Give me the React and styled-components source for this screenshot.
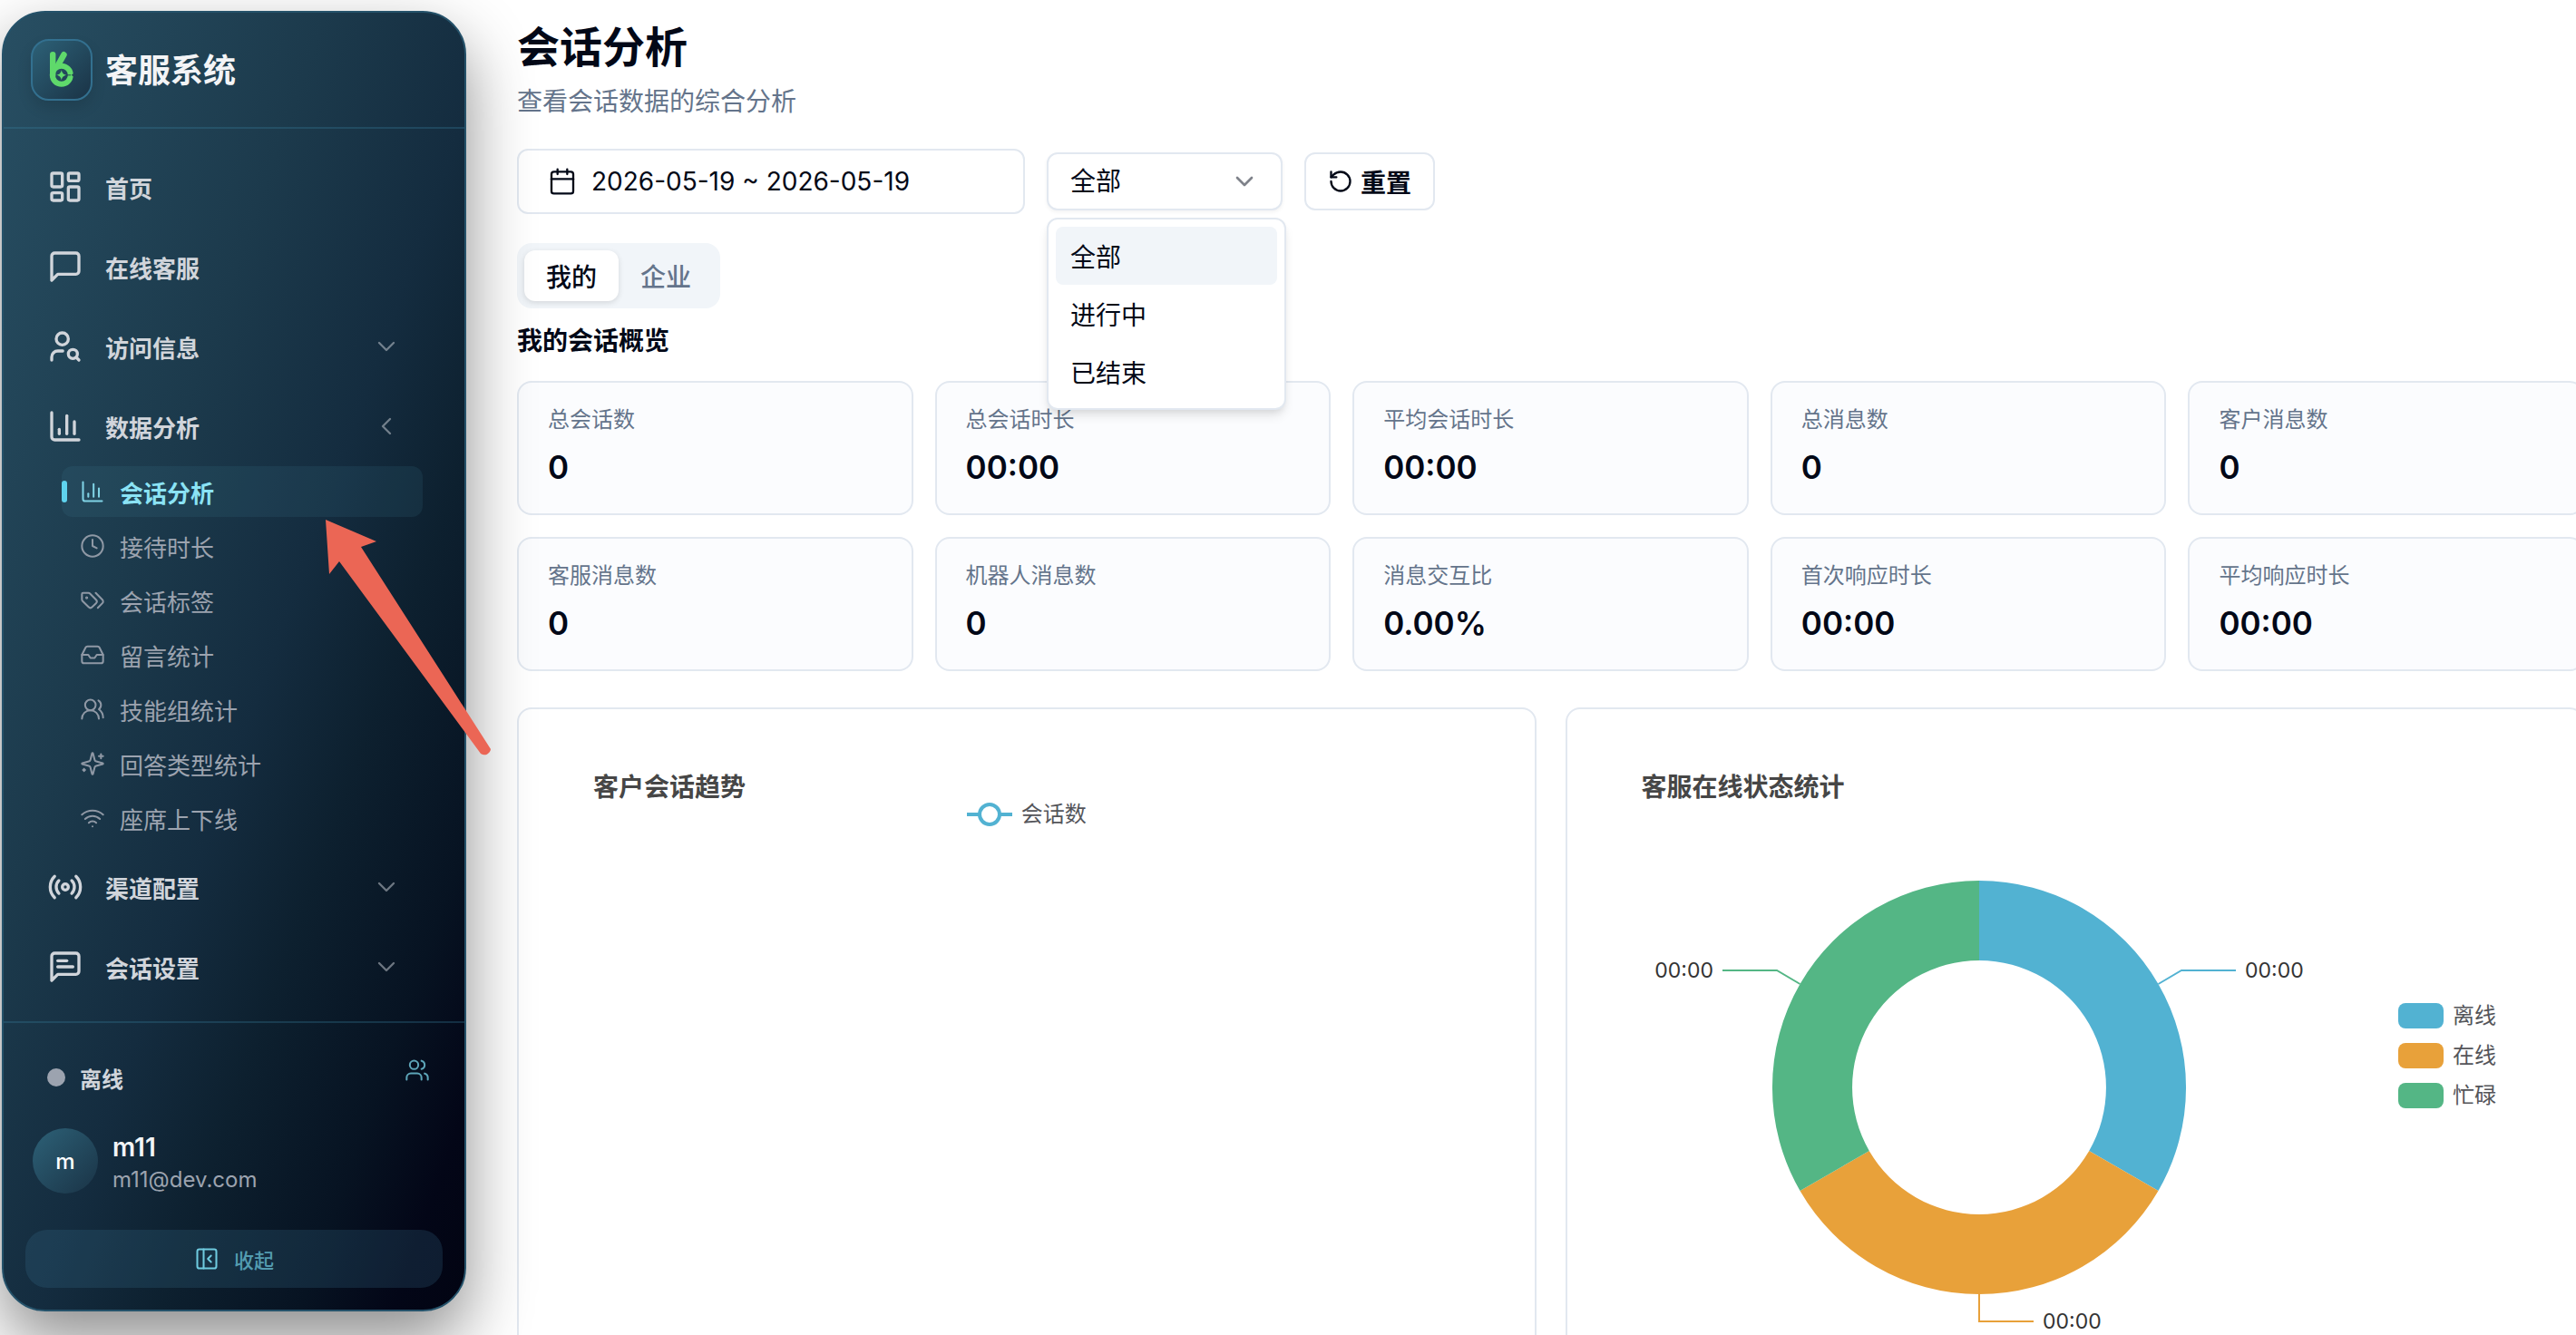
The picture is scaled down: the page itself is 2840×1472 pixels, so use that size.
import { useState } from "react"
import styled, { createGlobalStyle } from "styled-components"
import {
  Calendar, ChartColumn, ChevronDown, ChevronLeft, Clock, Inbox, LayoutDashboard, PanelLeftClose,
  Radio, RotateCcw, UserSearch, Users, UsersRound, Wifi
} from "lucide-react"


const GlobalStyle = createGlobalStyle`
  * {
    box-sizing: border-box;
  }

  body {
    margin: 0;
    background-color: #fff;
    color: #020817;
    font-family: Inter, "Noto Sans CJK SC", sans-serif;
    font-size: 28px;
  }

  button, select {
    font: inherit;
    color: inherit;
    cursor: pointer;
  }

  h1, h2, h3, p, ul, dl, dd {
    margin: 0;
    padding: 0;
  }

  ul {
    list-style: none;
  }
`

const AppContainer = styled.div`
  position: relative;
  display: flex;
  height: 100vh;
  overflow: hidden;
`

const Sidebar = styled.aside`
  position: relative;
  z-index: 1;
  display: flex;
  flex-direction: column;
  flex: none;
  width: 512px;
  margin: 12px 0 26px 2px;
  border: 2px solid #25526a;
  border-radius: 48px;
  background: linear-gradient(to bottom right, #284f63 0%, #1c3a4c 35%, #142c3f 54%, #0d202f 67%, #071322 82%, #030617 92%, #020412 100%) border-box;
  box-shadow: 0 32px 72px rgba(0, 0, 0, 0.45);
`

const Brand = styled.div`
  display: flex;
  align-items: center;
  gap: 14px;
  height: 128px;
  padding: 0 30px;
  border-bottom: 2px solid rgba(56, 130, 160, 0.3);
`

const LogoTile = styled.div`
  display: flex;
  justify-content: center;
  align-items: center;
  width: 68px;
  height: 68px;
  border: 2px solid #33708f;
  border-radius: 20px;
  background: linear-gradient(135deg, #2d6177, #1a3346);
  box-shadow: 0 8px 16px rgba(0, 0, 0, 0.12);
`

const BrandName = styled.div`
  padding-bottom: 4px;
  color: #f3f4f6;
  font-size: 36px;
  font-weight: 700;
`

const Nav = styled.nav`
  display: flex;
  flex-direction: column;
  flex: 1;
  gap: 8px;
  min-height: 0;
  padding: 24px 46px 0 24px;
`

const NavItem = styled.button`
  display: flex;
  align-items: center;
  gap: 24px;
  width: 100%;
  height: 80px;
  padding: 0 24px;
  border: 0;
  background: none;
  color: #d1d5db;
  font-size: 26px;
  font-weight: 600;
`

const NavArrow = styled.span`
  display: flex;
  margin-left: auto;
  opacity: 0.5;
`

const SubList = styled.ul`
  display: flex;
  flex-direction: column;
  gap: 4px;
  padding: 4px 0 0 40px;
`

const SubItem = styled.a`
  position: relative;
  display: flex;
  align-items: center;
  gap: 16px;
  height: 56px;
  padding: 0 20px;
  border-radius: 12px;
  background-color: ${ props => props.$active ? "rgba(70, 140, 165, 0.13)" : "transparent" };
  color: ${ props => props.$active ? "#8be3f5" : "#9ca3af" };
  font-size: 26px;
  font-weight: ${ props => props.$active ? 600 : 400 };
  text-decoration: none;

  svg {
    opacity: 0.9;
  }

  &::before {
    content: "";
    position: absolute;
    left: 0;
    display: ${ props => props.$active ? "block" : "none" };
    width: 6px;
    height: 24px;
    border-radius: 3px;
    background-color: #5fd3ee;
  }
`

const SidebarFooter = styled.div`
  display: flex;
  flex-direction: column;
  padding: 24px;
  border-top: 2px solid rgba(56, 130, 160, 0.3);
`

const StatusRow = styled.div`
  display: flex;
  justify-content: space-between;
  height: 72px;
`

const StatusButton = styled.button`
  display: flex;
  align-items: center;
  gap: 16px;
  padding: 0 24px;
  border: 0;
  background: none;
  color: #d1d5db;
  font-size: 24px;
  font-weight: 600;
`

const StatusDot = styled.span`
  width: 20px;
  height: 20px;
  border-radius: 50%;
  background-color: #9ca3af;
`

const TeamButton = styled.button`
  display: flex;
  justify-content: center;
  align-items: center;
  width: 56px;
  height: 56px;
  padding: 0;
  border: 0;
  background: none;
  color: #5da5b8;
`

const Profile = styled.div`
  display: flex;
  align-items: center;
  gap: 16px;
  padding: 20px 8px 40px;
`

const Avatar = styled.div`
  display: flex;
  justify-content: center;
  align-items: center;
  width: 72px;
  height: 72px;
  border-radius: 50%;
  background: linear-gradient(135deg, #2d6177, #1a3346);
  color: #fff;
  font-size: 24px;
  font-weight: 500;
`

const ProfileText = styled.div`
  height: 72px;
  padding-top: 3px;
  line-height: 36px;
`

const ProfileName = styled.div`
  color: #f3f4f6;
  font-weight: 600;
`

const ProfileMail = styled.div`
  color: #9ca3af;
  font-size: 24px;
`

const CollapseButton = styled.button`
  display: flex;
  justify-content: center;
  align-items: center;
  gap: 16px;
  height: 64px;
  border: 0;
  border-radius: 24px;
  background-color: rgba(60, 120, 150, 0.22);
  color: #6fcbe0;
  font-size: 22px;
  font-weight: 500;

  span {
    opacity: 0.7;
  }
`

const Main = styled.main`
  flex: 1;
  min-width: 0;
  padding: 24px 0 0 56px;
  overflow: hidden;
`

/* the report grid runs slightly past the right edge of the window */
const Content = styled.div`
  margin-right: -9px;
`

const PageTitle = styled.h1`
  font-size: 47px;
  font-weight: 600;
  line-height: 56px;
`

const PageHint = styled.p`
  margin-top: 12px;
  color: #64748b;
  line-height: 40px;
`

const Toolbar = styled.div`
  display: flex;
  align-items: center;
  gap: 24px;
  margin-top: 32px;
`

const DateButton = styled.button`
  display: flex;
  align-items: center;
  gap: 16px;
  width: 560px;
  height: 72px;
  padding: 0 32px;
  border: 2px solid #e2e8f0;
  border-radius: 12px;
  background-color: #fff;
`

const SelectBox = styled.div`
  position: relative;
  display: flex;
  align-items: center;
  width: 260px;
  height: 64px;
`

const Select = styled.select`
  appearance: none;
  width: 100%;
  height: 100%;
  padding: 0 24px;
  border: 2px solid #e2e8f0;
  border-radius: 12px;
  background-color: #fff;
  box-shadow: 0 2px 4px rgba(0, 0, 0, 0.05);
`

const SelectArrow = styled.span`
  position: absolute;
  right: 26px;
  display: flex;
  opacity: 0.5;
  pointer-events: none;
`

const Menu = styled.ul`
  position: absolute;
  top: 72px;
  left: 0;
  z-index: 1;
  width: 264px;
  padding: 8px;
  border: 2px solid #e2e8f0;
  border-radius: 12px;
  background-color: #fff;
  box-shadow: 0 8px 12px -2px rgba(0, 0, 0, 0.1), 0 4px 8px -4px rgba(0, 0, 0, 0.1);
`

const MenuItem = styled.button`
  display: block;
  width: 100%;
  height: 64px;
  padding: 0 16px;
  border: 0;
  border-radius: 8px;
  background-color: ${ props => props.$active ? "#f1f5f9" : "transparent" };
  text-align: left;
`

const ResetButton = styled.button`
  display: flex;
  align-items: center;
  gap: 8px;
  height: 64px;
  padding: 0 24px;
  border: 2px solid #e2e8f0;
  border-radius: 12px;
  background-color: #fff;
  font-weight: 600;
`

const TabList = styled.div`
  display: inline-flex;
  margin-top: 32px;
  padding: 8px;
  border-radius: 16px;
  background-color: #f1f5f9;
`

const Tab = styled.button`
  height: 56px;
  padding: 0 24px;
  border: 0;
  border-radius: 12px;
  background-color: ${ props => props.$active ? "#fff" : "transparent" };
  box-shadow: ${ props => props.$active ? "0 2px 6px rgba(0, 0, 0, 0.12)" : "none" };
  color: ${ props => props.$active ? "#020817" : "#64748b" };
  font-weight: 500;
`

const SectionTitle = styled.h2`
  margin-top: 16px;
  font-size: 28px;
  font-weight: 600;
  line-height: 40px;
`

const StatGrid = styled.dl`
  display: grid;
  grid-template-columns: repeat(5, 1fr);
  gap: 24px;
  margin-top: 24px;
`

const StatCard = styled.div`
  padding: 24px 32px;
  border: 2px solid #e2e8f0;
  border-radius: 16px;
  background-color: #fbfcfe;
`

const StatLabel = styled.dt`
  color: #64748b;
  font-size: 24px;
  line-height: 34px;
`

const StatValue = styled.dd`
  margin-top: 8px;
  font-size: 35px;
  font-weight: 600;
  line-height: 54px;
`

const ChartGrid = styled.div`
  display: grid;
  grid-template-columns: repeat(2, 1fr);
  gap: 32px;
  margin-top: 40px;
`

const ChartCard = styled.section`
  min-height: 800px;
  padding-top: 70px;
  border: 2px solid #e2e8f0;
  border-radius: 16px;
`

const ChartTitle = styled.h3`
  padding-left: 82px;
  color: #464646;
  font-size: 28px;
  font-weight: 700;
  line-height: 32px;
`

const LineLegend = styled.div`
  display: flex;
  justify-content: center;
  align-items: center;
  gap: 10px;
  color: #54555a;
  font-size: 24px;
  line-height: 26px;
`

const PieBody = styled.div`
  display: flex;
  align-items: flex-start;
  gap: 8px;
  margin-top: 76px;
  padding-right: 95px;
`

const PieFrame = styled.div`
  display: flex;
  justify-content: center;
  flex: 1;
`

const PieLabel = styled.text`
  fill: #333;
  font-size: 23px;
  dominant-baseline: central;
`

const PieLegend = styled.ul`
  display: flex;
  flex-direction: column;
  gap: 16px;
  padding-top: 146px;
`

const PieLegendItem = styled.li`
  display: flex;
  align-items: center;
  gap: 10px;
  color: #54555a;
  font-size: 24px;
  line-height: 28px;
`

const Swatch = styled.span`
  width: 50px;
  height: 28px;
  border-radius: 8px;
  background-color: ${ props => props.$color };
`

const Pointer = styled.svg`
  position: absolute;
  top: 570px;
  left: 356px;
  z-index: 2;
  pointer-events: none;
`


const Icon = ({ size, strokeWidth, children }) => (
  <svg width={ size } height={ size } viewBox="0 0 24 24" fill="none" stroke="currentColor" strokeWidth={ strokeWidth } strokeLinecap="round" strokeLinejoin="round">
    { children }
  </svg>
)

const Bubble = ({ children, ...props }) => (
  <Icon { ...props }>
    <path d="M21 15a2 2 0 0 1-2 2H7l-4 4V5a2 2 0 0 1 2-2h14a2 2 0 0 1 2 2z"/>
    { children }
  </Icon>
)

const BubbleText = (props) => (
  <Bubble { ...props }>
    <path d="M13 8H7"/>
    <path d="M17 12H7"/>
  </Bubble>
)

const TagPair = (props) => (
  <Icon { ...props }>
    <path d="m15 5 6.3 6.3a2.4 2.4 0 0 1 0 3.4L17 19"/>
    <path d="M9.586 5.586A2 2 0 0 0 8.172 5H3a1 1 0 0 0-1 1v5.172a2 2 0 0 0 .586 1.414L8.29 18.29a2.426 2.426 0 0 0 3.42 0l3.58-3.58a2.426 2.426 0 0 0 0-3.42z"/>
    <circle cx="6.5" cy="9.5" r=".5" fill="currentColor"/>
  </Icon>
)

const Stars = (props) => (
  <Icon { ...props }>
    <path d="M9.937 15.5A2 2 0 0 0 8.5 14.063l-6.135-1.582a.5.5 0 0 1 0-.962L8.5 9.936A2 2 0 0 0 9.937 8.5l1.582-6.135a.5.5 0 0 1 .963 0L14.063 8.5A2 2 0 0 0 15.5 9.937l6.135 1.581a.5.5 0 0 1 0 .964L15.5 14.063a2 2 0 0 0-1.437 1.437l-1.582 6.135a.5.5 0 0 1-.963 0z"/>
    <path d="M20 3v4"/>
    <path d="M22 5h-4"/>
    <path d="M4 17v2"/>
    <path d="M5 18H3"/>
  </Icon>
)

const Logo = () => (
  <svg width="28" height="42" viewBox="0 0 28 42" fill="none" stroke="#5fd96b" strokeLinecap="round">
    <path d="M4.2 4.2V27" strokeWidth="6.4"/>
    <path d="M16.4 4.3L9.6 16.5" strokeWidth="6.6"/>
    <circle cx="13.8" cy="26.8" r="10" strokeWidth="6"/>
    <path d="M20 26.8h4" stroke="#214354" strokeWidth="1" strokeLinecap="butt"/>
    <path d="M28 24.6l-3.4 2.2 3.4 2.2z" fill="#214354" stroke="none"/>
    <path d="M13.8 21.2c.9 3.6 2 4.7 5.6 5.6-3.6.9-4.7 2-5.6 5.6-.9-3.6-2-4.7-5.6-5.6 3.6-.9 4.7-2 5.6-5.6z" fill="#5fd96b" stroke="none"/>
  </svg>
)


const menu = [
  { name: "首页", icon: LayoutDashboard },
  { name: "在线客服", icon: Bubble },
  { name: "访问信息", icon: UserSearch, group: true },
  {
    name: "数据分析",
    icon: ChartColumn,
    group: true,
    children: [
      { name: "会话分析", icon: ChartColumn },
      { name: "接待时长", icon: Clock },
      { name: "会话标签", icon: TagPair },
      { name: "留言统计", icon: Inbox },
      { name: "技能组统计", icon: UsersRound },
      { name: "回答类型统计", icon: Stars },
      { name: "座席上下线", icon: Wifi }
    ]
  },
  { name: "渠道配置", icon: Radio, group: true },
  { name: "会话设置", icon: BubbleText, group: true }
]

const stats = [
  [ "总会话数", "0" ],
  [ "总会话时长", "00:00" ],
  [ "平均会话时长", "00:00" ],
  [ "总消息数", "0" ],
  [ "客户消息数", "0" ],
  [ "客服消息数", "0" ],
  [ "机器人消息数", "0" ],
  [ "消息交互比", "0.00%" ],
  [ "首次响应时长", "00:00" ],
  [ "平均响应时长", "00:00" ]
]

const statuses = [
  { name: "离线", color: "#52b2d2" },
  { name: "在线", color: "#e8a13a" },
  { name: "忙碌", color: "#54b685" }
]

const filters = [ "全部", "进行中", "已结束" ]
const tabs = [ "我的", "企业" ]


const SideMenu = () => {
  const [ opened, setOpened ] = useState("数据分析")
  const [ page, setPage ] = useState("会话分析")

  return (
    <Nav>
      {
        menu.map(({ name, icon: ItemIcon, group, children }) => (
          <div key={ name }>
            <NavItem onClick={ () => group && setOpened(opened === name ? "" : name) }>
              <ItemIcon size={ 40 } strokeWidth={ 2 }/>
              { name }
              { group && <NavArrow>{ opened === name ? <ChevronLeft size={ 32 } strokeWidth={ 1.75 }/> : <ChevronDown size={ 32 } strokeWidth={ 1.75 }/> }</NavArrow> }
            </NavItem>
            {
              children && opened === name &&
                <SubList>
                  {
                    children.map(({ name: sub, icon: SubIcon }) => (
                      <li key={ sub }>
                        <SubItem href="#" $active={ page === sub } onClick={ () => setPage(sub) }>
                          <SubIcon size={ 28 } strokeWidth={ 1.75 }/>{ sub }
                        </SubItem>
                      </li>
                    ))
                  }
                </SubList>
            }
          </div>
        ))
      }
    </Nav>
  )
}

const FilterSelect = () => {
  const [ open, setOpen ] = useState(true)
  const [ value, setValue ] = useState("全部")

  const handleMouseDown = (e) => {
    e.preventDefault()
    setOpen(!open)
  }

  const handlePick = (name) => {
    setValue(name)
    setOpen(false)
  }

  return (
    <SelectBox>
      <Select aria-label="会话状态" value={ value } onMouseDown={ handleMouseDown } onChange={ e => setValue(e.target.value) }>
        { filters.map(name => <option key={ name }>{ name }</option>) }
      </Select>
      <SelectArrow><ChevronDown size={ 32 }/></SelectArrow>
      {
        open &&
          <Menu>
            {
              filters.map(name => (
                <li key={ name }><MenuItem $active={ name === value } onClick={ () => handlePick(name) }>{ name }</MenuItem></li>
              ))
            }
          </Menu>
      }
    </SelectBox>
  )
}

const StatusPie = () => (
  <svg width="760" height="512" viewBox="-380 -239 760 512" fill="none" strokeWidth="2">
    <path d="M0-228A228 228 0 0 1 197.5 114L121.2 70A140 140 0 0 0 0-140z" fill={ statuses[ 0 ].color }/>
    <path d="M197.5 114A228 228 0 0 1-197.5 114L-121.2 70A140 140 0 0 0 121.2 70z" fill={ statuses[ 1 ].color }/>
    <path d="M-197.5 114A228 228 0 0 1 0-228V-140A140 140 0 0 0-121.2 70z" fill={ statuses[ 2 ].color }/>
    <path d="M197.5-114L223-129H283" stroke={ statuses[ 0 ].color }/>
    <path d="M0 228V258H60" stroke={ statuses[ 1 ].color }/>
    <path d="M-197.5-114L-223-129H-283" stroke={ statuses[ 2 ].color }/>
    <PieLabel x="293" y="-129">00:00</PieLabel>
    <PieLabel x="70" y="258">00:00</PieLabel>
    <PieLabel x="-293" y="-129" textAnchor="end">00:00</PieLabel>
  </svg>
)


function App() {

  const [ tab, setTab ] = useState("我的")

  return (
    <AppContainer>
      <GlobalStyle/>

      <Sidebar>
        <Brand>
          <LogoTile><Logo/></LogoTile>
          <BrandName>客服系统</BrandName>
        </Brand>
        <SideMenu/>
        <SidebarFooter>
          <StatusRow>
            <StatusButton><StatusDot/>离线</StatusButton>
            <TeamButton aria-label="团队"><Users size={ 28 } strokeWidth={ 1.75 }/></TeamButton>
          </StatusRow>
          <Profile>
            <Avatar>m</Avatar>
            <ProfileText>
              <ProfileName>m11</ProfileName>
              <ProfileMail>m11@dev.com</ProfileMail>
            </ProfileText>
          </Profile>
          <CollapseButton><PanelLeftClose size={ 28 } strokeWidth={ 1.75 }/><span>收起</span></CollapseButton>
        </SidebarFooter>
      </Sidebar>

      <Main>
        <Content>
          <PageTitle>会话分析</PageTitle>
          <PageHint>查看会话数据的综合分析</PageHint>

          <Toolbar>
            <DateButton><Calendar size={ 32 } strokeWidth={ 1.75 }/>2026-05-19 ~ 2026-05-19</DateButton>
            <FilterSelect/>
            <ResetButton><RotateCcw size={ 28 } strokeWidth={ 2 }/>重置</ResetButton>
          </Toolbar>

          <TabList role="tablist">
            {
              tabs.map(name => (
                <Tab key={ name } role="tab" aria-selected={ tab === name } $active={ tab === name } onClick={ () => setTab(name) }>{ name }</Tab>
              ))
            }
          </TabList>

          <SectionTitle>{ tab }会话概览</SectionTitle>
          <StatGrid>
            {
              stats.map(([ label, value ]) => (
                <StatCard key={ label }>
                  <StatLabel>{ label }</StatLabel>
                  <StatValue>{ value }</StatValue>
                </StatCard>
              ))
            }
          </StatGrid>

          <ChartGrid>
            <ChartCard>
              <ChartTitle>客户会话趋势</ChartTitle>
              <LineLegend>
                <svg width="50" height="28" viewBox="0 0 50 28" fill="#fff" stroke="#52b2d2" strokeWidth="4">
                  <path d="M0 14H50"/>
                  <circle cx="25" cy="14" r="11"/>
                </svg>
                会话数
              </LineLegend>
            </ChartCard>
            <ChartCard>
              <ChartTitle>客服在线状态统计</ChartTitle>
              <PieBody>
                <PieFrame><StatusPie/></PieFrame>
                <PieLegend>
                  { statuses.map(s => <PieLegendItem key={ s.name }><Swatch $color={ s.color }/>{ s.name }</PieLegendItem>) }
                </PieLegend>
              </PieBody>
            </ChartCard>
          </ChartGrid>
        </Content>
      </Main>

      <Pointer width="190" height="266" viewBox="0 0 190 266" fill="#eb6655">
        <path d="M3 3L59 27L42 33L185 256A7 7 0 0 1 174 261L18 49L7 63z"/>
      </Pointer>
    </AppContainer>
  )
}

export default App
